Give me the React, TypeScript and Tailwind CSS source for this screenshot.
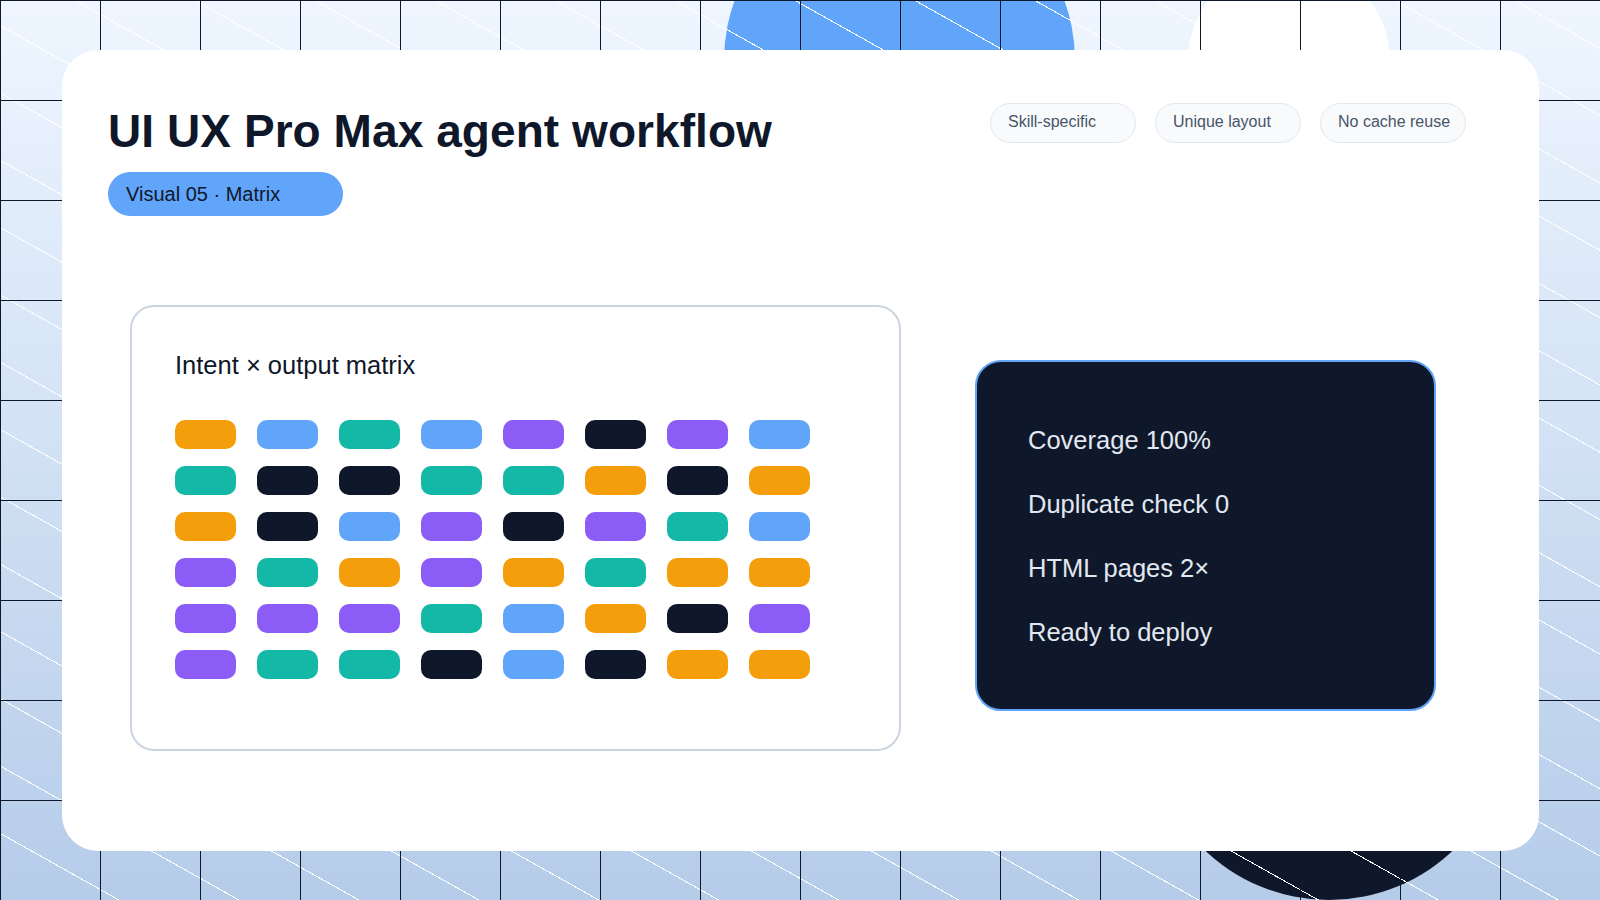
const chipColors: Record<string, string> = {
  o: "bg-[#f59e0b]",
  b: "bg-[#60a5fa]",
  t: "bg-[#14b8a6]",
  p: "bg-[#8b5cf6]",
  n: "bg-[#0f172a]",
};

const matrix = [
  "obtbpnpb",
  "tnnttono",
  "onbpnptb",
  "ptopotoo",
  "ppptbonp",
  "pttnbnoo",
];

const badges = ["Skill-specific", "Unique layout", "No cache reuse"];
const stats = ["Coverage 100%", "Duplicate check 0", "HTML pages 2×", "Ready to deploy"];

export default function App() {
  return (
    <div className="relative h-[900px] w-[1600px] overflow-hidden bg-gradient-to-b from-[#eff6ff] to-[#b5cce9] font-['Liberation_Sans',Arial,sans-serif] text-[#0f172a]">
      {/* backdrop shapes */}
      <div className="absolute left-[724px] top-[-115px] size-[351px] rounded-full bg-[#60a5fa]" />
      <div className="absolute left-[1188px] top-[-40px] size-[202px] rounded-full bg-white" />
      <div className="absolute left-[1149px] top-[540px] size-[360px] rounded-full bg-[#0f172a]" />
      <div className="absolute inset-0 bg-[repeating-linear-gradient(29.3deg,transparent_0,transparent_57.7px,#ffffff_57.7px,#ffffff_58.7px)]" />
      <div className="absolute inset-0 bg-[linear-gradient(#0f172a_1px,transparent_1px),linear-gradient(90deg,#0f172a_1px,transparent_1px)] bg-[size:100px_100px]" />

      <div className="relative ml-[62px] mt-[50px] h-[801px] w-[1477px] rounded-[36px] bg-white">
        <div className="flex justify-between pl-[46px] pr-[73px] pt-[50px]">
          <div>
            <h1 className="text-[46px] font-bold leading-[62px] tracking-[0.07px]">UI UX Pro Max agent workflow</h1>
            <div className="mt-[10px] h-[44px] w-[235px] rounded-[22px] bg-[#60a5fa] pl-[18px] text-[20px] leading-[44px]">
              Visual 05 · Matrix
            </div>
          </div>
          <div className="flex gap-[19px] pt-[3px]">
            {badges.map((b) => (
              <div
                key={b}
                className="h-[40px] w-[146px] rounded-[20px] border border-[#e2e8f0] bg-[#f8fafc] pl-[17px] text-[16px] leading-[35px] text-[#475569]"
              >
                {b}
              </div>
            ))}
          </div>
        </div>

        <div className="mt-[89px] flex items-start pl-[68px]">
          <div className="h-[446px] w-[771px] rounded-[24px] border-2 border-[#cbd5e1] px-[43px] pt-[40px]">
            <div className="text-[25.5px] leading-[36px]">Intent × output matrix</div>
            <div className="mt-[37px] flex flex-col gap-[17px]">
              {matrix.map((row, r) => (
                <div key={r} className="flex gap-[21px]">
                  {row.split("").map((c, i) => (
                    <div key={i} className={`h-[29px] w-[61px] rounded-[10px] ${chipColors[c]}`} />
                  ))}
                </div>
              ))}
            </div>
          </div>

          <div className="ml-[74px] mt-[55px] flex h-[351px] w-[461px] flex-col justify-center gap-[28px] rounded-[26px] border-2 border-[#60a5fa] bg-[#0f172a] pl-[51px] text-[25.5px] leading-[36px] text-[#e2e8f0]">
            {stats.map((s) => (
              <div key={s}>{s}</div>
            ))}
          </div>
        </div>
      </div>
    </div>
  );
}
